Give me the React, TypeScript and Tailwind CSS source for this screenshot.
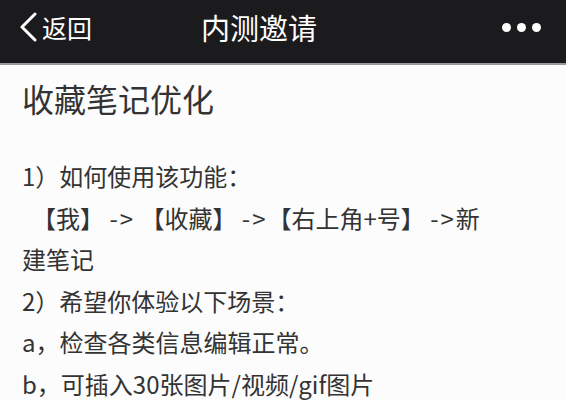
import React from 'react'

const font = { fontFamily: '"Noto Sans CJK SC", "Noto Sans", sans-serif' }

const Arrow = () => <span className="tracking-[2px]">-&gt;</span>

export default function App() {
  return (
    <div className="w-[566px] h-[400px] overflow-hidden bg-[#fcfcfc]" style={font}>
      {/* top bar */}
      <div className="relative h-[63px] bg-[#1b1a1c] flex items-center px-[18px] pb-[9px]">
        <div className="flex items-center gap-[4px] text-white">
          <svg width="20" height="30" viewBox="0 0 20 30" fill="none">
            <path d="M17 2 L4 15 L17 28" stroke="white" strokeWidth="3" strokeLinecap="round" strokeLinejoin="round" />
          </svg>
          <span className="text-[25px] leading-none">返回</span>
        </div>
        <div className="absolute left-0 right-0 top-0 h-full flex items-center justify-center pb-[9px] pr-[48px] pointer-events-none">
          <span className="text-white text-[29px] leading-none">内测邀请</span>
        </div>
        <div className="ml-auto flex items-center gap-[6px] mr-[7px]">
          <span className="w-[9px] h-[9px] rounded-full bg-white" />
          <span className="w-[9px] h-[9px] rounded-full bg-white" />
          <span className="w-[9px] h-[9px] rounded-full bg-white" />
        </div>
      </div>
      <div className="h-[2px] bg-[#9a9a9a]" />

      {/* content */}
      <div className="px-[22px] text-[#333333]">
        <h1 className="text-[32px] leading-[40px] mt-[13px] font-normal">收藏笔记优化</h1>
        <div className="mt-[37px] text-[24px] leading-[41.5px]">
          <p>1）如何使用该功能：</p>
          <p className="pl-[10px]">
            【我】 <Arrow /> 【收藏】 <Arrow />【右上角+号】 <Arrow />新
          </p>
          <p>建笔记</p>
          <p>2）希望你体验以下场景：</p>
          <p>a，检查各类信息编辑正常。</p>
          <p>b，可插入30张图片/视频/gif图片</p>
        </div>
      </div>
    </div>
  )
}
